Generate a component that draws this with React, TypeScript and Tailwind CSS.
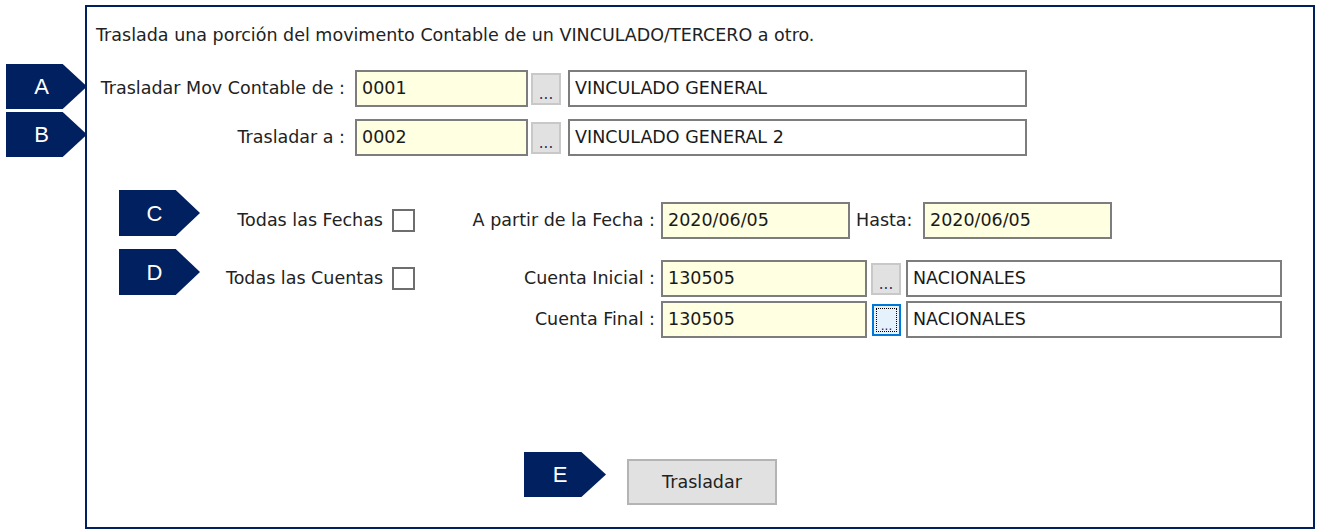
import React from "react";

const uiFont = { fontFamily: '"DejaVu Sans", Verdana, sans-serif' };
const markerFont = { fontFamily: '"Liberation Sans", Arial, sans-serif' };

// Callout marker with an arrow point on its right side
const Marker: React.FC<{ letter: string; className: string }> = ({ letter, className }) => (
    <div
        style={markerFont}
        className={`absolute bg-[#002060] text-white text-[22px] flex items-center justify-center pr-[10px] [clip-path:polygon(0_0,70%_0,100%_50%,70%_100%,0_100%)] ${className}`}
    >
        {letter}
    </div>
);

const Field: React.FC<{ value: string; className: string; tone?: 'yellow' | 'white' }> = ({ value, className, tone = 'yellow' }) => (
    <div
        className={`h-[37px] border-2 border-[#7d7d7d] flex items-center pl-[5px] text-[#1a1a1a] ${tone === 'yellow' ? 'bg-[#ffffe1]' : 'bg-white'} ${className}`}
    >
        {value}
    </div>
);

const Lookup: React.FC<{ focused?: boolean }> = ({ focused }) =>
    focused ? (
        <div className="w-[29px] h-[32px] border-2 border-[#0078d7] bg-[#e5f1fb] p-[2px] flex">
            <div className="flex-1 border border-dotted border-black flex items-end justify-center text-[12px] leading-[10px] text-[#1a1a4a]">...</div>
        </div>
    ) : (
        <div className="w-[30px] h-[32px] border-2 border-[#c8c8c8] bg-[#e1e1e1] flex items-end justify-center pb-[3px] text-[15px] leading-[12px] text-[#2a2a5a]">
            ...
        </div>
    );

const Check: React.FC = () => (
    <div className="w-[23px] h-[23px] border-2 border-[#6e6e6e] bg-white" />
);

export default function App() {
    return (
        <div className="relative w-[1318px] h-[532px] bg-white text-[#222]" style={uiFont}>
            <div className="ml-[85px] pt-[5px]">
                <div className="w-[1230px] h-[524px] border-2 border-[#002060] text-[17.5px]">
                    <div className="pt-[18px] pl-[9px] leading-[20px]">
                        Traslada una porción del movimento Contable de un VINCULADO/TERCERO a otro.
                    </div>

                    {/* origen / destino */}
                    <div className="mt-[25px] flex items-center">
                        <div className="w-[258px] text-right whitespace-nowrap">Trasladar Mov Contable de :</div>
                        <Field value="0001" className="ml-[10px] w-[173px]" />
                        <div className="ml-[3px]"><Lookup /></div>
                        <Field value="VINCULADO GENERAL" tone="white" className="ml-[7px] w-[459px]" />
                    </div>
                    <div className="mt-[12px] flex items-center">
                        <div className="w-[258px] text-right">Trasladar a :</div>
                        <Field value="0002" className="ml-[10px] w-[173px]" />
                        <div className="ml-[3px]"><Lookup /></div>
                        <Field value="VINCULADO GENERAL 2" tone="white" className="ml-[7px] w-[459px]" />
                    </div>

                    {/* fechas */}
                    <div className="mt-[46px] flex items-center">
                        <div className="w-[296px] text-right">Todas las Fechas</div>
                        <div className="ml-[9px]"><Check /></div>
                        <div className="w-[240px] text-right whitespace-nowrap">A partir de la Fecha :</div>
                        <Field value="2020/06/05" className="ml-[6px] w-[189px]" />
                        <div className="ml-[6px] w-[67px]">Hasta:</div>
                        <Field value="2020/06/05" className="w-[189px]" />
                    </div>

                    {/* cuentas */}
                    <div className="mt-[21px] flex items-start">
                        <div className="h-[37px] flex items-center">
                            <div className="w-[296px] text-right">Todas las Cuentas</div>
                            <div className="ml-[9px]"><Check /></div>
                        </div>
                        <div className="flex flex-col gap-[4px]">
                            <div className="flex items-center">
                                <div className="w-[240px] text-right">Cuenta Inicial :</div>
                                <Field value="130505" className="ml-[6px] w-[206px]" />
                                <div className="ml-[4px]"><Lookup /></div>
                                <Field value="NACIONALES" tone="white" className="ml-[5px] w-[376px]" />
                            </div>
                            <div className="flex items-center">
                                <div className="w-[240px] text-right">Cuenta Final :</div>
                                <Field value="130505" className="ml-[6px] w-[206px]" />
                                <div className="ml-[5px]"><Lookup focused /></div>
                                <Field value="NACIONALES" tone="white" className="ml-[5px] w-[376px]" />
                            </div>
                        </div>
                    </div>

                    <div className="mt-[121px] ml-[540px]">
                        <button className="w-[150px] h-[46px] bg-[#e1e1e1] border-2 border-[#b4b4b4] text-[17.5px] text-[#222]">
                            Trasladar
                        </button>
                    </div>
                </div>
            </div>

            <Marker letter="A" className="left-[6px] top-[64px] w-[81px] h-[45px]" />
            <Marker letter="B" className="left-[6px] top-[112px] w-[81px] h-[45px]" />
            <Marker letter="C" className="left-[119px] top-[190px] w-[81px] h-[46px]" />
            <Marker letter="D" className="left-[119px] top-[249px] w-[81px] h-[46px]" />
            <Marker letter="E" className="left-[524px] top-[452px] w-[82px] h-[45px]" />
        </div>
    );
}
